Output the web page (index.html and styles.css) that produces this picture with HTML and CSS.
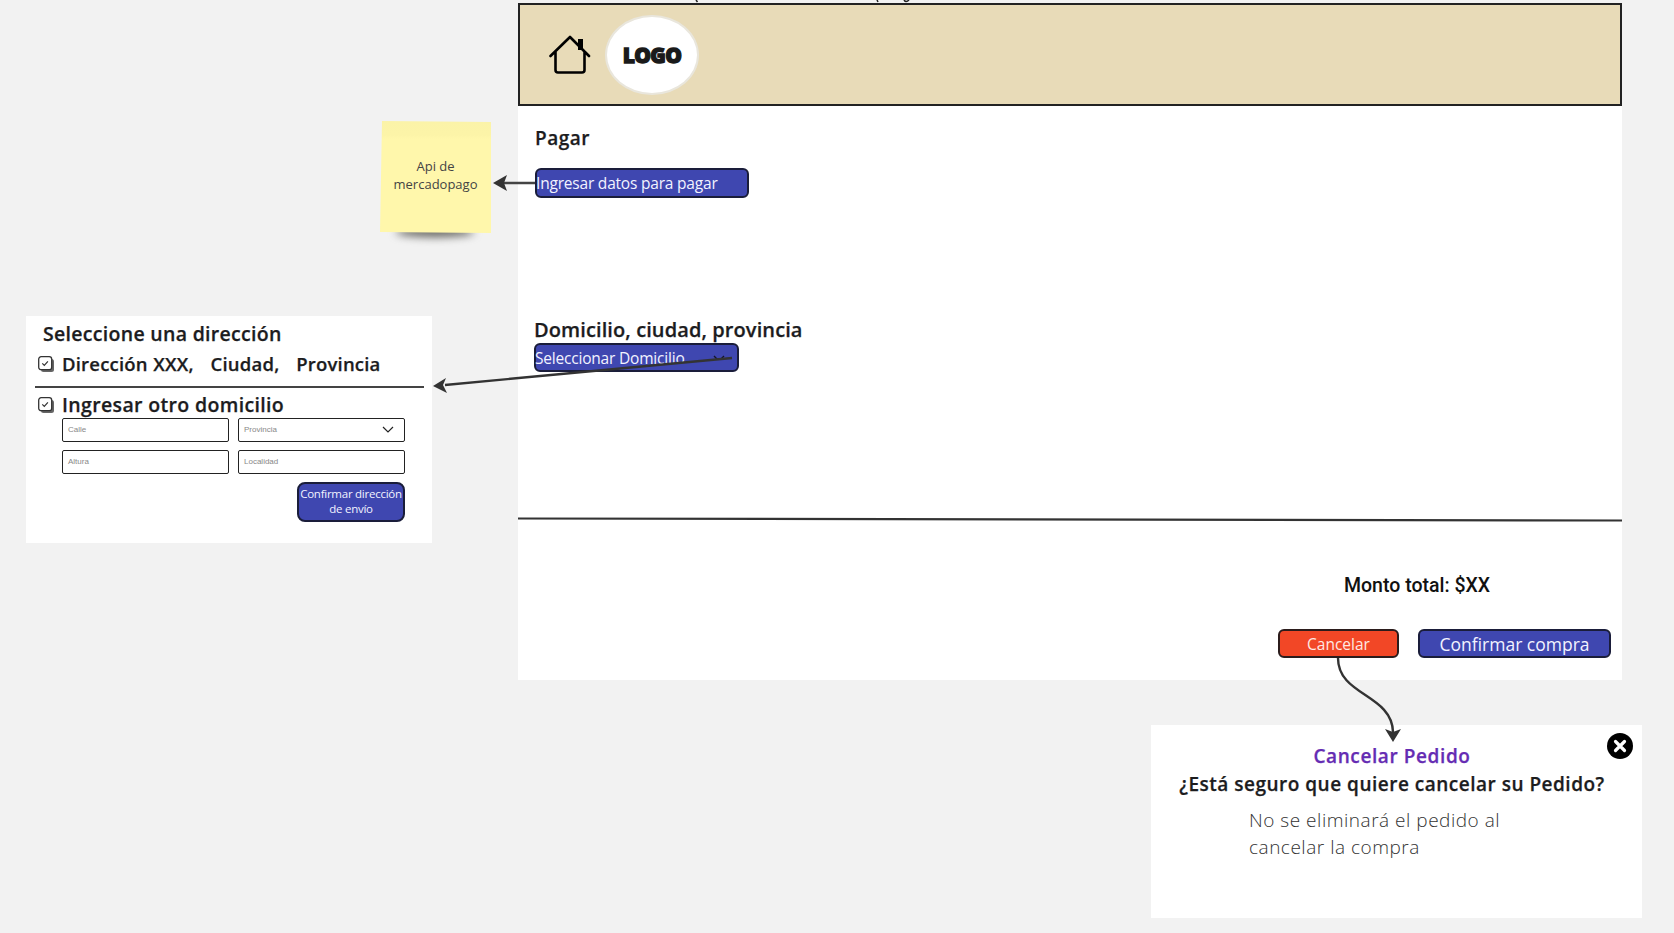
FILE: index.html
```html
<!DOCTYPE html>
<html lang="en">
<head>
    <meta charset="UTF-8">
    <meta name="viewport" content="width=device-width, initial-scale=1.0">
    <title>Pagar</title>
    <link rel="stylesheet" href="styles.css">
</head>
<body>
    <div class="board">

        <!-- Sticky note -->
        <div class="note-shadow"></div>
        <div class="note">
            <p>Api de<br>mercadopago</p>
        </div>

        <!-- Address picker -->
        <section class="address-panel">
            <h3 class="address-title">Seleccione una dirección</h3>
            <div class="check-row">
                <svg class="check" viewBox="0 0 16 16"><rect x="3" y="3" width="13" height="13" rx="2.5" fill="#666"/><rect x="0.7" y="0.7" width="13" height="13" rx="2.5" fill="#fff" stroke="#333" stroke-width="1.3"/><path d="M4.3 7.4l2 2 3.6-4" fill="none" stroke="#333" stroke-width="1.2"/></svg>
                <span class="check-label">Dirección XXX,   Ciudad,   Provincia</span>
            </div>
            <hr class="address-rule">
            <div class="check-row check-row-big">
                <svg class="check" viewBox="0 0 16 16"><rect x="3" y="3" width="13" height="13" rx="2.5" fill="#666"/><rect x="0.7" y="0.7" width="13" height="13" rx="2.5" fill="#fff" stroke="#333" stroke-width="1.3"/><path d="M4.3 7.4l2 2 3.6-4" fill="none" stroke="#333" stroke-width="1.2"/></svg>
                <span class="check-label">Ingresar otro domicilio</span>
            </div>
            <div class="address-form">
                <div class="field">Calle</div>
                <div class="field">Provincia
                    <svg class="field-arrow" viewBox="0 0 12 7"><path d="M1 1l5 5 5-5" fill="none" stroke="#222" stroke-width="1.2"/></svg>
                </div>
                <div class="field">Altura</div>
                <div class="field">Localidad</div>
            </div>
            <div class="address-actions">
                <button class="btn btn-small">Confirmar dirección<br>de envío</button>
            </div>
        </section>

        <!-- Main screen -->
        <main class="screen">
            <header class="topbar">
                <svg class="home" viewBox="0 0 42 40"><path d="M1.5 21L21 2l19 19M6.5 16.5V35a2.5 2.5 0 0 0 2.5 2.5h24a2.5 2.5 0 0 0 2.5-2.5V16.5" fill="none" stroke="#000" stroke-width="2.6" stroke-linecap="round" stroke-linejoin="round"/><rect x="29" y="4" width="5" height="11" fill="#000"/></svg>
                <div class="logo"><span>LOGO</span></div>
            </header>
            <div class="content">
                <h2 class="section-title">Pagar</h2>
                <button class="btn btn-pay">Ingresar datos para pagar</button>
                <h2 class="section-title section-title-big">Domicilio, ciudad, provincia</h2>
                <button class="btn btn-address">Seleccionar Domicilio
                    <svg class="btn-arrow" viewBox="0 0 12 7"><path d="M1 1l5 5 5-5" fill="none" stroke="#14152c" stroke-width="1.4"/></svg>
                </button>
                <div class="summary">
                    <p class="total">Monto total: $XX</p>
                    <div class="actions">
                        <button class="btn btn-cancel">Cancelar</button>
                        <button class="btn btn-confirm">Confirmar compra</button>
                    </div>
                </div>
            </div>
        </main>

        <!-- Cancel dialog -->
        <section class="dialog">
            <h3 class="dialog-title">Cancelar Pedido</h3>
            <p class="dialog-question">¿Está seguro que quiere cancelar su Pedido?</p>
            <p class="dialog-text">No se eliminará el pedido al<br>cancelar la compra</p>
            <svg class="dialog-close" viewBox="0 0 26 26"><circle cx="13" cy="13" r="13" fill="#000"/><path d="M8.5 8.5l9 9M17.5 8.5l-9 9" stroke="#fff" stroke-width="3.2" stroke-linecap="round"/></svg>
        </section>

        <!-- Connectors drawn over the board -->
        <svg class="wires" viewBox="0 0 1674 933">
            <path d="M696 0l1.5 2M877 0l1 2M904 0q2 3 5 0" fill="none" stroke="#222" stroke-width="1.5"/>
            <path d="M518 518.5L1622 520.5" stroke="#333" stroke-width="2.2" fill="none"/>

            <path d="M535 183H500" stroke="#444" stroke-width="2.4" fill="none"/>
            <path d="M493 183l14-8-3 8 3 8z" fill="#333"/>

            <path d="M640 366.6L732 358V370H640z" fill="#3f47b0"/>
            <path d="M732 358L445 385" stroke="#333" stroke-width="2.4" fill="none"/>
            <path d="M433 386l13-8-3 7 4 8z" fill="#333"/>

            <path d="M1338 658C1338 696 1392 694 1393 732" stroke="#333" stroke-width="2.4" fill="none"/>
            <path d="M1393 742l-8-13 8 3 8-3z" fill="#333"/>
        </svg>
    </div>
</body>
</html>
```

FILE: styles.css
```css
/* Reset Styles */
html, body {
    margin: 0;
    padding: 0;
    height: 100%;
    overflow: hidden;
}

body {
    background-color: #f2f2f2;
    font-family: "Open Sans", "Liberation Sans", sans-serif;
    color: #1c1c1e;
}

h2, h3, p {
    margin: 0;
}

/* Whiteboard: everything below sits at its own place on the canvas */
.board {
    position: relative;
    width: 1674px;
    height: 933px;
    overflow: hidden;
}

.wires {
    position: absolute;
    left: 0;
    top: 0;
    width: 1674px;
    height: 933px;
    pointer-events: none;
}

/* Sticky note */
.note {
    position: absolute;
    left: 380px;
    top: 121px;
    width: 111px;
    height: 112px;
    display: flex;
    align-items: center;
    justify-content: center;
    text-align: center;
    font-size: 13px;
    line-height: 18px;
    color: #444;
    background: linear-gradient(#fbf3a8 0, #fcf4a8 14px, #fff7ab 18px);
    clip-path: polygon(2px 0, 100% 1px, 100% 100%, 0 99%);
}

.note p {
    margin-bottom: 4px;
}

.note-shadow {
    position: absolute;
    left: 396px;
    top: 227px;
    width: 78px;
    height: 10px;
    background-color: #5f5f5a;
    border-radius: 50%;
    filter: blur(4px);
}

/* Main screen */
.screen {
    position: absolute;
    left: 518px;
    top: 3px;
    width: 1104px;
    height: 677px;
    display: flex;
    flex-direction: column;
    background-color: #fff;
}

.topbar {
    height: 103px;
    box-sizing: border-box;
    display: flex;
    align-items: center;
    gap: 14px;
    padding: 0 0 0 29px;
    background-color: #e8dbb8;
    border: 2px solid #222;
}

.home {
    width: 42px;
    height: 40px;
}

.logo {
    width: 94px;
    height: 80px;
    box-sizing: border-box;
    display: flex;
    align-items: center;
    justify-content: center;
    background-color: #fff;
    border: 2px solid #e9e6dc;
    border-radius: 50%;
}

.logo span {
    font-family: "Open Sans", sans-serif;
    font-weight: 800;
    font-size: 21px;
    letter-spacing: -0.7px;
    color: #1a1a1a;
    -webkit-text-stroke: 1.3px #1a1a1a;
}

.content {
    flex: 1;
    display: flex;
    flex-direction: column;
    align-items: flex-start;
    padding: 20px 11px 22px 17px;
}

.section-title {
    font-size: 19px;
    line-height: 24px;
    font-weight: 600;
    letter-spacing: 0.5px;
    -webkit-text-stroke: 0.25px #1c1c1e;
}

.section-title-big {
    margin: 119px 0 0 -1px;
    font-size: 20px;
    line-height: 26px;
    letter-spacing: 0.1px;
}

/* Buttons */
.btn {
    box-sizing: border-box;
    padding: 0;
    font-family: inherit;
    color: #f2f3ff;
    background-color: #3f47b0;
    border: 2px solid #1a1d3a;
    border-radius: 6px;
}

.btn-pay {
    width: 214px;
    height: 30px;
    margin-top: 18px;
    font-size: 15.5px;
    letter-spacing: -0.2px;
    text-align: left;
    text-indent: -1px;
}

.btn-address {
    position: relative;
    width: 205px;
    height: 29px;
    margin-left: -1px;
    font-size: 15.5px;
    letter-spacing: -0.2px;
    text-align: left;
    text-indent: -1px;
}

.btn-arrow {
    position: absolute;
    right: 12px;
    top: 10px;
    width: 12px;
    height: 7px;
}

.summary {
    margin-top: auto;
    align-self: stretch;
}

.total {
    margin-left: 809px;
    font-family: Roboto, sans-serif;
    font-size: 19.5px;
    line-height: 24px;
    font-weight: 500;
    color: #111;
}

.actions {
    display: flex;
    justify-content: flex-end;
    align-items: flex-end;
    gap: 19px;
    margin-top: 31px;
}

.btn-cancel {
    width: 121px;
    height: 29px;
    font-size: 15.5px;
    color: #ffe9e3;
    background-color: #f24726;
    border-color: #2b1c1c;
}

.btn-confirm {
    width: 193px;
    height: 29px;
    font-size: 17.5px;
}

/* Address picker */
.address-panel {
    position: absolute;
    left: 26px;
    top: 316px;
    width: 406px;
    height: 227px;
    box-sizing: border-box;
    padding-top: 5px;
    background-color: #fff;
}

.address-title {
    margin-left: 17px;
    font-size: 19.5px;
    line-height: 26px;
    font-weight: 600;
    letter-spacing: 0.3px;
    -webkit-text-stroke: 0.25px #1c1c1e;
}

.check-row {
    display: flex;
    align-items: center;
    gap: 8px;
    margin: 4px 0 9px 12px;
    font-size: 18.5px;
    line-height: 26px;
    font-weight: 600;
    letter-spacing: 0.2px;
    word-spacing: 0.6px;
    white-space: pre;
    -webkit-text-stroke: 0.25px #1c1c1e;
}

.check-row-big {
    margin: 4px 0 0 12px;
    font-size: 19.5px;
    letter-spacing: 0.35px;
    word-spacing: 0;
}

.check {
    width: 16px;
    height: 16px;
}

.address-rule {
    width: 389px;
    height: 2px;
    margin: 0 0 0 9px;
    border: 0;
    background-color: #444;
}

.address-form {
    display: grid;
    grid-template-columns: 167px 167px;
    grid-auto-rows: 24px;
    gap: 8px 9px;
    margin-left: 36px;
}

.field {
    position: relative;
    box-sizing: border-box;
    padding-left: 5px;
    font-family: "Liberation Sans", sans-serif;
    font-size: 8px;
    line-height: 21px;
    color: #888;
    border: 1.5px solid #222;
    border-radius: 2px;
}

.field-arrow {
    position: absolute;
    right: 10px;
    top: 7px;
    width: 12px;
    height: 7px;
}

.address-actions {
    display: flex;
    justify-content: flex-end;
    margin: 8px 27px 0 0;
}

.btn-small {
    width: 108px;
    height: 40px;
    padding-bottom: 2px;
    font-size: 11.5px;
    line-height: 15px;
    letter-spacing: -0.25px;
    border-width: 2.5px;
    border-radius: 8px;
}

/* Cancel dialog */
.dialog {
    position: absolute;
    left: 1151px;
    top: 725px;
    width: 491px;
    height: 193px;
    box-sizing: border-box;
    padding: 18px 9px 0 0;
    background-color: #fff;
    text-align: center;
}

.dialog-title {
    font-size: 19px;
    line-height: 26px;
    font-weight: 600;
    letter-spacing: 0.6px;
    color: #652cb3;
    -webkit-text-stroke: 0.25px #652cb3;
}

.dialog-question {
    margin-top: 2px;
    font-size: 19px;
    line-height: 26px;
    font-weight: 600;
    letter-spacing: 0.5px;
    -webkit-text-stroke: 0.25px #1c1c1e;
}

.dialog-text {
    margin: 10px 0 0 98px;
    font-size: 19px;
    line-height: 27px;
    font-weight: 300;
    letter-spacing: 0.52px;
    text-align: left;
    color: #333;
}

.dialog-close {
    position: absolute;
    right: 9px;
    top: 8px;
    width: 26px;
    height: 26px;
}
```
